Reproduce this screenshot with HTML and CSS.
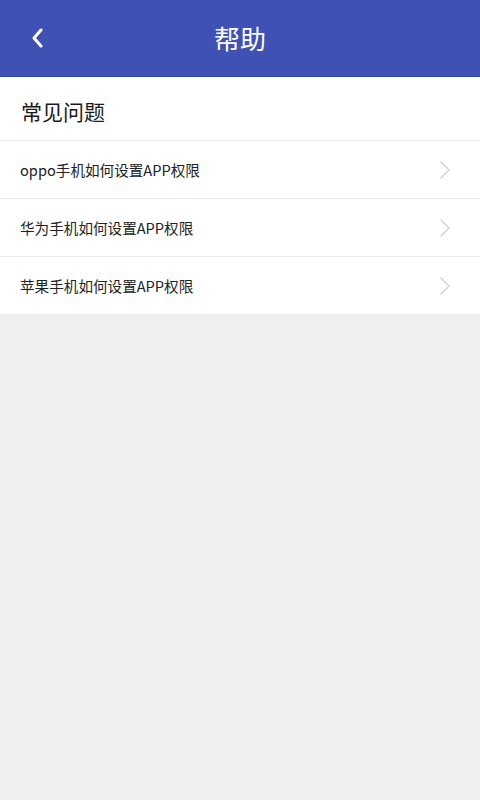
FILE: index.html
```html
<!DOCTYPE html>
<html lang="zh-CN">
<head>
    <meta charset="UTF-8">
    <meta name="viewport" content="width=device-width, initial-scale=1.0">
    <title>帮助</title>
    <link rel="stylesheet" href="styles.css">
</head>
<body>
    <!-- Top bar -->
    <header class="topbar">
        <a class="back" href="#">
            <svg width="14" height="20" viewBox="0 0 14 20">
                <path d="M10 2 L3 10 L10 18" fill="none" stroke="#fff" stroke-width="3" stroke-linecap="round" stroke-linejoin="round"/>
            </svg>
        </a>
        <h1 class="title">帮助</h1>
    </header>

    <!-- FAQ list -->
    <section class="faq">
        <h2 class="faq-title">常见问题</h2>
        <ul class="faq-list">
            <li class="faq-item">
                <span>oppo手机如何设置APP权限</span>
                <svg class="arrow" width="12" height="20" viewBox="0 0 12 20"><path d="M1.5 1.5 L10 10 L1.5 18.5" fill="none" stroke="#cfcfcf" stroke-width="1.3"/></svg>
            </li>
            <li class="faq-item">
                <span>华为手机如何设置APP权限</span>
                <svg class="arrow" width="12" height="20" viewBox="0 0 12 20"><path d="M1.5 1.5 L10 10 L1.5 18.5" fill="none" stroke="#cfcfcf" stroke-width="1.3"/></svg>
            </li>
            <li class="faq-item">
                <span>苹果手机如何设置APP权限</span>
                <svg class="arrow" width="12" height="20" viewBox="0 0 12 20"><path d="M1.5 1.5 L10 10 L1.5 18.5" fill="none" stroke="#cfcfcf" stroke-width="1.3"/></svg>
            </li>
        </ul>
    </section>
</body>
</html>
```

FILE: styles.css
```css
html, body {
    height: 100%;
}
body {
    margin: 0;
    background-color: #efefef;
    font-family: "Noto Sans CJK SC", "Noto Sans", sans-serif;
}

/* Top bar */
.topbar {
    height: 76px;
    background-color: #3f51b5;
    border-bottom: 1px solid #3546a3;
    display: flex;
    align-items: center;
    justify-content: center;
    position: relative;
}
.back {
    position: absolute;
    left: 31px;
    top: 28px;
    display: flex;
}
.title {
    margin: 0;
    font-size: 26px;
    font-weight: normal;
    color: #fff;
    line-height: 1;
}

/* FAQ */
.faq {
    background-color: #fff;
}
.faq-title {
    margin: 0;
    height: 64px;
    box-sizing: border-box;
    padding: 5px 0 0 21px;
    display: flex;
    align-items: center;
    font-size: 21px;
    font-weight: normal;
    color: #1a1a1a;
    border-bottom: 1px solid #ebebeb;
}
.faq-list {
    list-style: none;
    margin: 0;
    padding: 0;
}
.faq-item {
    height: 57px;
    padding: 0 29px 0 20px;
    display: flex;
    align-items: center;
    justify-content: space-between;
    font-size: 14.6px;
    color: #222;
    border-bottom: 1px solid #ebebeb;
}
.faq-item:last-child {
    border-bottom: none;
}
```
